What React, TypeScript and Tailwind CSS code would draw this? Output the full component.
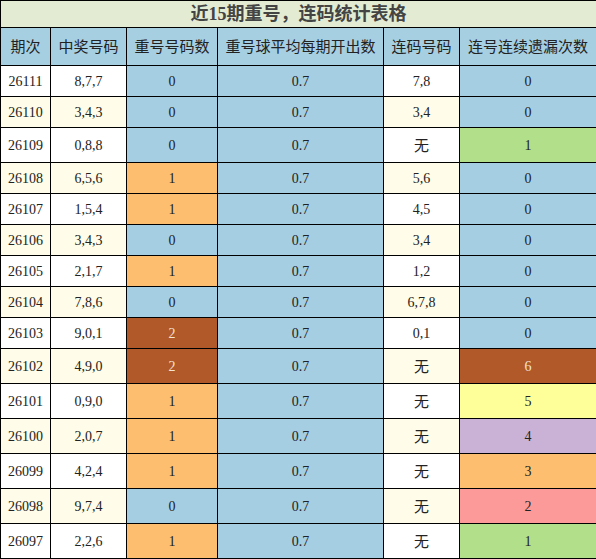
import React from 'react';

const BLUE = 'bg-[#a6cee3]';
const ORANGE = 'bg-[#fdbf6f]';
const BROWN = 'bg-[#b15928] text-[#f4e4d6]';

const lossColor: Record<string, string> = {
  '0': BLUE,
  '1': 'bg-[#b2df8a]',
  '2': 'bg-[#fb9a99]',
  '3': ORANGE,
  '4': 'bg-[#cab2d6]',
  '5': 'bg-[#ffff99]',
  '6': BROWN,
};

const repeatColor: Record<string, string> = {
  '0': BLUE,
  '1': ORANGE,
  '2': BROWN,
};

const rows = [
  ['26111', '8,7,7', '0', '7,8', '0'],
  ['26110', '3,4,3', '0', '3,4', '0'],
  ['26109', '0,8,8', '0', '无', '1'],
  ['26108', '6,5,6', '1', '5,6', '0'],
  ['26107', '1,5,4', '1', '4,5', '0'],
  ['26106', '3,4,3', '0', '3,4', '0'],
  ['26105', '2,1,7', '1', '1,2', '0'],
  ['26104', '7,8,6', '0', '6,7,8', '0'],
  ['26103', '9,0,1', '2', '0,1', '0'],
  ['26102', '4,9,0', '2', '无', '6'],
  ['26101', '0,9,0', '1', '无', '5'],
  ['26100', '2,0,7', '1', '无', '4'],
  ['26099', '4,2,4', '1', '无', '3'],
  ['26098', '9,7,4', '0', '无', '2'],
  ['26097', '2,2,6', '1', '无', '1'],
];

const headers = ['期次', '中奖号码', '重号号码数', '重号球平均每期开出数', '连码号码', '连号连续遗漏次数'];

export default function App() {
  return (
    <div className="w-[596px] h-[559px] bg-white overflow-hidden">
      <table
        className="w-[596px] table-fixed border-collapse text-center text-[#222] text-[14px]"
        style={{ fontFamily: '"Liberation Serif", "Noto Sans CJK SC", serif' }}
      >
        <colgroup>
          <col className="w-[50px]" />
          <col className="w-[76px]" />
          <col className="w-[91px]" />
          <col className="w-[166px]" />
          <col className="w-[76px]" />
          <col className="w-[137px]" />
        </colgroup>
        <thead>
          <tr className="h-[27px]">
            <th
              colSpan={6}
              className="border border-black bg-[#e3ecd3] text-[18px] font-bold text-[#444] leading-none"
            >
              近15期重号，连码统计表格
            </th>
          </tr>
          <tr className="h-[38px] bg-[#a6cfe2]">
            {headers.map((h) => (
              <th
                key={h}
                className="border border-black font-normal text-[15px] text-[#222] font-['Noto_Sans_CJK_SC',sans-serif]"
              >
                {h}
              </th>
            ))}
          </tr>
        </thead>
        <tbody>
          {rows.map(([issue, nums, rep, link, loss], i) => {
            const shade = i % 2 === 1 ? 'bg-[#fffde9]' : 'bg-white';
            const none = link === '无';
            return (
              <tr key={issue} className={none ? 'h-[35px]' : 'h-[31px]'}>
                <td className={`border border-black ${shade}`}>{issue}</td>
                <td className={`border border-black ${shade}`}>{nums}</td>
                <td className={`border border-black ${repeatColor[rep]}`}>{rep}</td>
                <td className={`border border-black ${BLUE}`}>0.7</td>
                <td
                  className={`border border-black ${shade} ${
                    none ? "text-[15px] font-['Noto_Sans_CJK_SC',sans-serif]" : ''
                  }`}
                >
                  {link}
                </td>
                <td className={`border border-black ${lossColor[loss]}`}>{loss}</td>
              </tr>
            );
          })}
        </tbody>
      </table>
    </div>
  );
}
